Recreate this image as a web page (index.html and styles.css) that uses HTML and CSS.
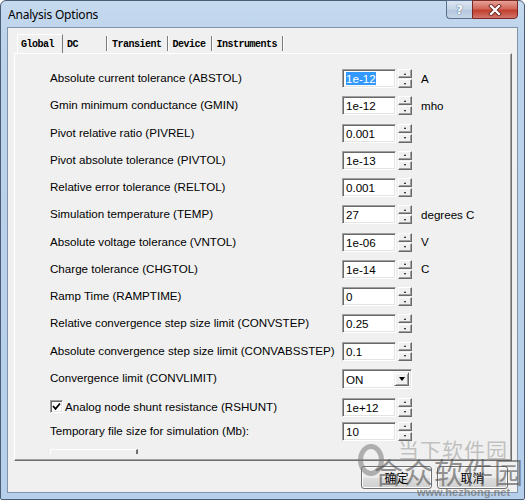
FILE: index.html
```html
<!DOCTYPE html>
<html>
<head>
<meta charset="utf-8">
<link rel="stylesheet" href="styles.css">
</head>
<body>
<div class="window">
  <div class="titlebar">
    <span class="title">Analysis Options</span>
    <div class="caption-btns">
      <div class="cbtn help">?</div>
      <div class="cbtn close">
        <svg width="14" height="12" viewBox="0 0 14 12"><path d="M3 2 L11 10 M11 2 L3 10" stroke="#6b2a26" stroke-width="4" stroke-linecap="square"/><path d="M3 2 L11 10 M11 2 L3 10" stroke="#ffffff" stroke-width="2.2" stroke-linecap="square"/></svg>
      </div>
    </div>
  </div>
  <div class="client">
    <div class="tabs">
      <div class="tab active">Global</div>
      <div class="tab dc">DC</div>
      <div class="tab">Transient</div>
      <div class="tab">Device</div>
      <div class="tab">Instruments</div>
    </div>
    <div class="panel">
      <div class="rows">
        <div class="row"><span class="label">Absolute current tolerance (ABSTOL)</span><div class="spin"><div class="field"><span class="sel">1e-12</span></div><div class="sbtns"><div class="sb"><i class="up"></i></div><div class="sb"><i class="down"></i></div></div></div><span class="unit">A</span></div>
        <div class="row"><span class="label">Gmin minimum conductance (GMIN)</span><div class="spin"><div class="field">1e-12</div><div class="sbtns"><div class="sb"><i class="up"></i></div><div class="sb"><i class="down"></i></div></div></div><span class="unit">mho</span></div>
        <div class="row"><span class="label">Pivot relative ratio (PIVREL)</span><div class="spin"><div class="field">0.001</div><div class="sbtns"><div class="sb"><i class="up"></i></div><div class="sb"><i class="down"></i></div></div></div></div>
        <div class="row"><span class="label">Pivot absolute tolerance (PIVTOL)</span><div class="spin"><div class="field">1e-13</div><div class="sbtns"><div class="sb"><i class="up"></i></div><div class="sb"><i class="down"></i></div></div></div></div>
        <div class="row"><span class="label">Relative error tolerance (RELTOL)</span><div class="spin"><div class="field">0.001</div><div class="sbtns"><div class="sb"><i class="up"></i></div><div class="sb"><i class="down"></i></div></div></div></div>
        <div class="row"><span class="label">Simulation temperature (TEMP)</span><div class="spin"><div class="field">27</div><div class="sbtns"><div class="sb"><i class="up"></i></div><div class="sb"><i class="down"></i></div></div></div><span class="unit">degrees C</span></div>
        <div class="row"><span class="label">Absolute voltage tolerance (VNTOL)</span><div class="spin"><div class="field">1e-06</div><div class="sbtns"><div class="sb"><i class="up"></i></div><div class="sb"><i class="down"></i></div></div></div><span class="unit">V</span></div>
        <div class="row"><span class="label">Charge tolerance (CHGTOL)</span><div class="spin"><div class="field">1e-14</div><div class="sbtns"><div class="sb"><i class="up"></i></div><div class="sb"><i class="down"></i></div></div></div><span class="unit">C</span></div>
        <div class="row"><span class="label">Ramp Time (RAMPTIME)</span><div class="spin"><div class="field">0</div><div class="sbtns"><div class="sb"><i class="up"></i></div><div class="sb"><i class="down"></i></div></div></div></div>
        <div class="row"><span class="label">Relative convergence step size limit (CONVSTEP)</span><div class="spin"><div class="field">0.25</div><div class="sbtns"><div class="sb"><i class="up"></i></div><div class="sb"><i class="down"></i></div></div></div></div>
        <div class="row"><span class="label">Absolute convergence step size limit (CONVABSSTEP)</span><div class="spin"><div class="field">0.1</div><div class="sbtns"><div class="sb"><i class="up"></i></div><div class="sb"><i class="down"></i></div></div></div></div>
        <div class="row combo-row"><span class="label">Convergence limit (CONVLIMIT)</span><div class="combo"><span class="combo-text">ON</span><div class="combo-btn"><i class="tri"></i></div></div></div>
        <div class="row chk-row"><span class="label"><span class="checkbox"><svg width="9" height="9" viewBox="0 0 9 9"><path d="M1 4 L3.5 6.8 L8 1.5" fill="none" stroke="#000" stroke-width="1.8"/></svg></span>Analog node shunt resistance (RSHUNT)</span><div class="spin"><div class="field">1e+12</div><div class="sbtns"><div class="sb"><i class="up"></i></div><div class="sb"><i class="down"></i></div></div></div></div>
        <div class="row last-row"><span class="label">Temporary file size for simulation (Mb):</span><div class="spin"><div class="field">10</div><div class="sbtns"><div class="sb"><i class="up"></i></div><div class="sb"><i class="down"></i></div></div></div></div>
      </div>
      <div class="track"></div>
    </div>
    <div class="buttons">
      <div class="btn">确定</div>
      <div class="btn">取消</div>
    </div>
  </div>
  <div class="watermark">
    <div class="wm-logo"></div>
    <div class="wm-top">当下软件园</div>
    <div class="wm-main">合众软件园</div>
    <div class="wm-url">www.hezhong.net</div>
  </div>
</div>
</body>
</html>
```
FILE: styles.css
```css
* { box-sizing: border-box; }
html, body { margin: 0; padding: 0; background: #ffffff; }
body { width: 525px; height: 500px; overflow: hidden; }

.window {
  position: relative;
  width: 525px;
  height: 500px;
  border: 1px solid #4a5d74;
  border-radius: 6px 6px 2px 2px;
  background: linear-gradient(#c6daef 0px, #bcd3eb 40px, #b6cfea 100%);
  padding: 0 6px 6px 6px;
  display: flex;
  flex-direction: column;
}

.titlebar {
  height: 26px;
  display: flex;
  align-items: flex-start;
  position: relative;
}
.title {
  font-family: "Noto Sans", "Open Sans", sans-serif;
  font-size: 12px;
  color: #000;
  margin-top: 5px;
  margin-left: 1px;
  letter-spacing: -0.2px;
}
.caption-btns {
  margin-left: auto;
  margin-right: 0px;
  display: flex;
  margin-top: -1px;
}
.cbtn {
  height: 19px;
  border: 1px solid #58708d;
  display: flex;
  align-items: center;
  justify-content: center;
}
.help {
  width: 26px;
  border-radius: 0 0 0 4px;
  border-right: none;
  background: linear-gradient(#dbe6f2, #c3d3e6 50%, #b2c5dc 51%, #c6d6e8);
  font-family: "DejaVu Sans", sans-serif;
  font-size: 12px;
  font-weight: bold;
  color: #ffffff;
  text-shadow: 0 0 1px #4d6a8a, 0 0 1px #4d6a8a;
}
.close {
  width: 46px;
  border-radius: 0 0 4px 0;
  border-color: #7a2a22;
  background: linear-gradient(#e7a196, #d2665a 45%, #c1402f 55%, #d1756a);
}

.client {
  flex: 1;
  background: #f0f0f0;
  border: 1px solid #8093aa;
  padding: 6px 5px 0 6px;
  display: flex;
  flex-direction: column;
}

.tabs {
  height: 19px;
  display: flex;
  padding-left: 3px;
  align-items: stretch;
}
.tab {
  font-family: "Liberation Mono", "DejaVu Sans Mono", monospace;
  font-weight: bold;
  font-size: 10px;
  letter-spacing: -0.5px;
  color: #000;
  padding: 3px 5px 0 3px;
  border-right: 1px solid #7b7b7b;
  box-shadow: 1px 0 0 #ffffff;
  margin-top: 2px;
  margin-right: 2px;
  height: 15px;
  line-height: 12px;
}
.tab.active {
  margin-top: 0;
  height: 19px;
  padding: 3px 8px 0 3px;
  border-left: 1px solid #ffffff;
  border-top: 1px solid #ffffff;
  box-shadow: none;
  border-right: 1px solid #7b7b7b;
  margin-right: 1px;
  line-height: 14px;
}
.tab.dc { width: 43px; }

.panel {
  height: 408px;
  border-top: 1px solid #ffffff;
  border-left: 1px solid #ffffff;
  border-right: 1px solid #6f6f6f;
  border-bottom: 1px solid #6f6f6f;
  box-shadow: inset -1px -1px 0 #a0a0a0;
  padding: 15px 0 0 35px;
  position: relative;
}

.rows { display: flex; flex-direction: column; }
.row {
  height: 19px;
  display: grid;
  grid-template-columns: 283px 70px auto;
  column-gap: 9px;
  align-items: center;
  font-family: "Liberation Sans", Arial, sans-serif;
  font-size: 11.6px;
  color: #000;
}
.row + .row { margin-top: 8.25px; }
.row.combo-row { height: 20px; }
.row.chk-row { margin-top: 8.75px; }
.row.last-row { margin-top: 5px; }
.label { display: flex; align-items: center; margin-top: -2px; white-space: nowrap; }
.unit { margin-top: -1px; }

.spin { display: flex; height: 19px; width: 70px; }
.field {
  width: 54px;
  height: 19px;
  background: #ffffff;
  border-top: 1px solid #a0a0a0;
  border-left: 1px solid #a0a0a0;
  border-right: 1px solid #ffffff;
  border-bottom: 1px solid #ffffff;
  box-shadow: inset 1px 1px 0 #696969, inset -1px -1px 0 #e3e3e3;
  padding: 2px 0 0 3px;
  line-height: 14px;
}
.sel { background: #3399ff; color: #ffffff; }
.sbtns {
  margin-left: 2px;
  width: 14px;
  display: flex;
  flex-direction: column;
  justify-content: space-between;
}
.sb {
  height: 9px;
  background: #f0f0f0;
  border-top: 1px solid #ffffff;
  border-left: 1px solid #ffffff;
  border-right: 1px solid #696969;
  border-bottom: 1px solid #696969;
  box-shadow: inset -1px -1px 0 #a0a0a0;
  display: flex;
  align-items: center;
  justify-content: center;
}
.sb i { display: block; width: 0; height: 0; border-left: 1.5px solid transparent; border-right: 1.5px solid transparent; }
.sb i.up { border-bottom: 2px solid #000; }
.sb i.down { border-top: 2px solid #000; }

.combo {
  width: 70px;
  height: 20px;
  background: #ffffff;
  border-top: 1px solid #a0a0a0;
  border-left: 1px solid #a0a0a0;
  border-right: 1px solid #ffffff;
  border-bottom: 1px solid #ffffff;
  box-shadow: inset 1px 1px 0 #696969, inset -1px -1px 0 #e3e3e3;
  display: flex;
  padding: 2px 2px 2px 2px;
}
.combo-text { flex: 1; padding-left: 1px; line-height: 15px; }
.combo-btn {
  width: 15px;
  background: #f0f0f0;
  border-top: 1px solid #f0f0f0;
  border-left: 1px solid #f0f0f0;
  border-right: 1px solid #696969;
  border-bottom: 1px solid #696969;
  box-shadow: inset 1px 1px 0 #fff, inset -1px -1px 0 #a0a0a0;
  display: flex;
  align-items: center;
  justify-content: center;
}
.tri { display: block; width: 0; height: 0; border-left: 3.5px solid transparent; border-right: 3.5px solid transparent; border-top: 4px solid #000; }

.checkbox {
  width: 13px;
  height: 13px;
  background: #ffffff;
  border-top: 1px solid #a0a0a0;
  border-left: 1px solid #a0a0a0;
  border-right: 1px solid #ffffff;
  border-bottom: 1px solid #ffffff;
  box-shadow: inset 1px 1px 0 #696969, inset -1px -1px 0 #e3e3e3;
  display: flex;
  align-items: center;
  justify-content: center;
  margin-right: 2px;
}

.track {
  margin-top: 8px;
  width: 88px;
  height: 5px;
  border-top: 1px solid #ffffff;
  border-left: 1px solid #ffffff;
  border-right: 2px solid #6f6f6f;
}

.buttons {
  flex: 1;
  display: flex;
  justify-content: flex-end;
  align-items: flex-start;
  gap: 5px;
  padding: 5px 4px 0 0;
}
.btn {
  width: 71px;
  height: 23px;
  border: 1px solid #707070;
  border-radius: 3px;
  background: linear-gradient(#f2f2f2, #ebebeb 50%, #dddddd 51%, #cfcfcf);
  box-shadow: inset 0 0 0 1px #fcfcfc;
  display: flex;
  align-items: center;
  justify-content: center;
  font-family: "Noto Sans CJK SC", sans-serif;
  font-size: 12px;
  color: #000;
}

.watermark {
  position: absolute;
  left: 0; top: 0;
  width: 525px; height: 500px;
  pointer-events: none;
}
.wm-logo {
  position: absolute;
  left: 357px; top: 443px;
  width: 26px; height: 32px;
  border: 5px solid rgba(120,120,120,0.55);
  border-radius: 50%;
}
.wm-top {
  position: absolute;
  left: 397px; top: 436px;
  font-family: "Noto Sans CJK SC", sans-serif;
  font-size: 21px;
  letter-spacing: 1px;
  color: rgba(150,150,150,0.55);
  line-height: 24px;
}
.wm-main {
  position: absolute;
  left: 373px; top: 453px;
  font-family: "Noto Sans CJK SC", sans-serif;
  font-size: 29px;
  letter-spacing: 1px;
  color: rgba(80,80,80,0.6);
  line-height: 34px;
}
.wm-url {
  position: absolute;
  left: 416px; top: 485px;
  font-family: "Liberation Sans", sans-serif;
  font-weight: bold;
  font-size: 11px;
  color: rgba(110,110,110,0.7);
  line-height: 12px;
}
```
